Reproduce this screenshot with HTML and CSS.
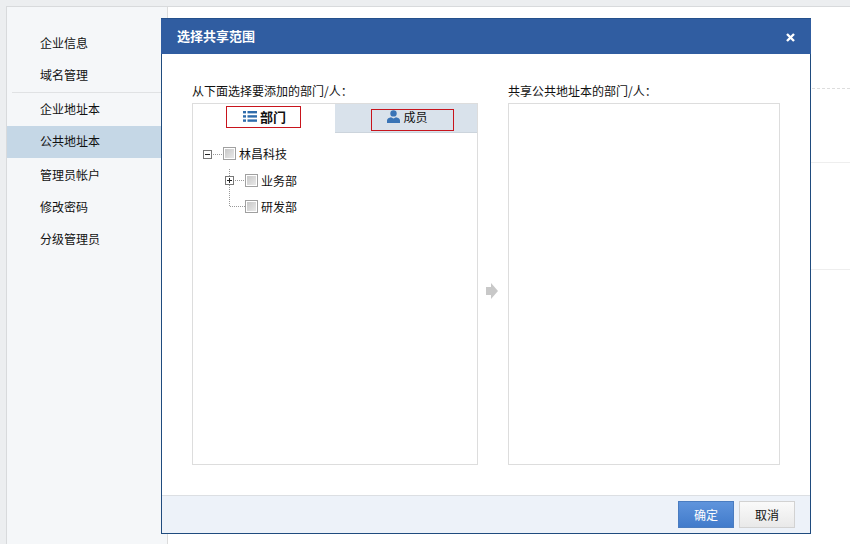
FILE: index.html
```html
<!DOCTYPE html>
<html lang="zh-CN">
<head>
<meta charset="utf-8">
<title>选择共享范围</title>
<link rel="stylesheet" href="styles.css">
</head>
<body>
<div class="frame">
  <nav class="sidebar">
    <a class="nav-item">企业信息</a>
    <a class="nav-item">域名管理</a>
    <div class="nav-divider"></div>
    <a class="nav-item">企业地址本</a>
    <a class="nav-item active">公共地址本</a>
    <a class="nav-item">管理员帐户</a>
    <a class="nav-item">修改密码</a>
    <a class="nav-item">分级管理员</a>
  </nav>
  <main class="main">
    <div class="rule rule-dashed"></div>
    <div class="rule rule-second"></div>
    <div class="rule rule-third"></div>
  </main>
</div>

<section class="modal">
  <header class="modal-head">
    <h1 class="modal-title">选择共享范围</h1>
    <svg class="close" width="9" height="9" viewBox="0 0 9 9"><path d="M1 1L8 8M8 1L1 8" stroke="#fff" stroke-width="2.4" fill="none"/></svg>
  </header>
  <div class="modal-body">
    <div class="col col-left">
      <div class="col-label">从下面选择要添加的部门/人：</div>
      <div class="box">
        <div class="tabs">
          <div class="tab tab-on">
            <svg width="14" height="11" viewBox="0 0 14 11"><g fill="#2f6cab"><rect x="0" y="0" width="3" height="2.4"/><rect x="4.5" y="0" width="9.5" height="2.4"/><rect x="0" y="4.2" width="3" height="2.4"/><rect x="4.5" y="4.2" width="9.5" height="2.4"/><rect x="0" y="8.4" width="3" height="2.4"/><rect x="4.5" y="8.4" width="9.5" height="2.4"/></g></svg>
            <span>部门</span>
            <i class="mark mark-a"></i>
          </div>
          <div class="tab tab-off">
            <svg width="13" height="13" viewBox="0 0 13 13"><g fill="#3a74b6"><circle cx="6.5" cy="3.4" r="3.2"/><path d="M0 13V10.6C0 8.6 2 7.6 4 7.2L6.5 8.6L9 7.2C11 7.6 13 8.6 13 10.6V13Z"/></g></svg>
            <span>成员</span>
            <i class="mark mark-b"></i>
          </div>
        </div>
        <ul class="tree">
          <li class="node node-root">
            <svg class="link" width="20" height="26" viewBox="0 0 20 26"><rect x="0.5" y="9.5" width="8" height="8" fill="#fff" stroke="#777"/><path d="M2 13.5H7" stroke="#222"/><path d="M10 13.5H20" stroke="#999" stroke-dasharray="1 1"/></svg>
            <span class="check"></span><span class="node-text">林昌科技</span>
          </li>
          <li class="node">
            <svg class="link" width="20" height="26" viewBox="0 0 20 26"><path d="M4.5 2V9M4.5 18V26" stroke="#999" stroke-dasharray="1 1"/><rect x="0.5" y="9.5" width="8" height="8" fill="#fff" stroke="#777"/><path d="M2 13.5H7M4.5 11V16" stroke="#222"/><path d="M10 13.5H20" stroke="#999" stroke-dasharray="1 1"/></svg>
            <span class="check"></span><span class="node-text">业务部</span>
          </li>
          <li class="node">
            <svg class="link" width="20" height="26" viewBox="0 0 20 26"><path d="M4.5 0V13.5H20" stroke="#999" stroke-dasharray="1 1" fill="none"/></svg>
            <span class="check"></span><span class="node-text">研发部</span>
          </li>
        </ul>
      </div>
    </div>
    <div class="arrow-col">
      <svg width="12" height="16" viewBox="0 0 12 16"><path d="M0 4H5V0L12 8L5 16V12H0Z" fill="#c8c8c8"/></svg>
    </div>
    <div class="col col-right">
      <div class="col-label">共享公共地址本的部门/人：</div>
      <div class="box"></div>
    </div>
  </div>
  <footer class="modal-foot">
    <button class="btn btn-primary" type="button">确定</button>
    <button class="btn btn-plain" type="button">取消</button>
  </footer>
</section>
</body>
</html>
```
FILE: styles.css
```css
* { box-sizing: border-box; }
html, body { margin: 0; height: 100%; }
body {
  padding: 6px 0 0 6px;
  background: #eceef0;
  font-family: "Noto Sans CJK SC", "Liberation Sans", sans-serif;
  font-size: 12px;
  color: #111;
  overflow: hidden;
}
.frame {
  display: flex;
  height: 538px;
  border-top: 1px solid #d8dadc;
  border-left: 1px solid #d8dadc;
  background: #fff;
}
.sidebar {
  width: 161px;
  flex: none;
  padding-top: 20px;
  background: #f5f7f9;
  border-right: 1px solid #dcdcdc;
}
.nav-item {
  display: block;
  height: 32px;
  padding-left: 33px;
  line-height: 32px;
  color: #111;
}
.nav-item.active {
  background: #c5d7e6;
  margin: 1px 0;
  line-height: 30px;
}
.nav-divider {
  height: 1px;
  margin: 1px 0 0 5px;
  background: #e0e2e4;
}
.main { flex: 1; padding-top: 81px; }
.rule { border-top: 1px solid #eee; }
.rule-dashed { border-top: 1px dashed #ddd; }
.rule-second { margin-top: 73px; }
.rule-third { margin-top: 106px; }

.modal {
  position: absolute;
  left: 161px;
  top: 18px;
  width: 650px;
  height: 516px;
  display: flex;
  flex-direction: column;
  background: #fff;
  border: 1px solid #1f4b7e;
  border-top: 0;
}
.modal-head {
  height: 36px;
  flex: none;
  display: flex;
  align-items: center;
  justify-content: space-between;
  margin: 0 -1px;
  padding: 0 16px 2px 16px;
  background: #305da1;
  border-top: 1px solid #24508c;
}
.modal-title {
  margin: 0;
  font-size: 13px;
  font-weight: 700;
  color: #fff;
}
.close { margin-top: 4px; }
.modal-body {
  flex: 1;
  display: flex;
  padding: 29px 30px 30px;
}
.col { display: flex; flex-direction: column; }
.col-left { width: 286px; }
.col-right { width: 272px; }
.col-label {
  height: 20px;
  line-height: 16px;
  color: #111;
  white-space: nowrap;
}
.box {
  flex: 1;
  border: 1px solid #ddd;
  background: #fff;
}
.arrow-col {
  width: 30px;
  padding: 33px 0 0 8px;
  display: flex;
  align-items: center;
}
.tabs { display: flex; height: 29px; }
.tab {
  position: relative;
  flex: 0 0 50%;
  display: flex;
  align-items: center;
  justify-content: center;
  gap: 3px;
}
.tab-on { font-size: 13px; font-weight: 700; color: #111; padding: 0 0 5px 1px; }
.tab-off { background: #d9e2eb; border-bottom: 1px solid #ccd4dc; padding: 0 0 3px 3px; }
.mark {
  position: absolute;
  height: 22px;
  border: 1px solid #c8141c;
}
.mark-a { left: 33px; top: 2px; width: 75px; }
.mark-b { left: 36px; top: 5px; width: 83px; }
.tree { list-style: none; margin: 0; padding: 7px 0 0 10px; }
.node {
  display: flex;
  align-items: center;
  height: 26px;
  padding-left: 22px;
}
.node-root { padding-left: 0; height: 27px; }
.link { flex: none; }
.check {
  flex: none;
  width: 13px;
  height: 13px;
  border: 1px solid #a0a0a0;
  box-shadow: inset 0 0 0 1px #fff;
  background: linear-gradient(135deg, #c4c4c4, #ececec);
}
.node-text { margin-left: 3px; color: #111; }
.modal-foot {
  height: 38px;
  flex: none;
  display: flex;
  justify-content: flex-end;
  gap: 5px;
  padding: 5px 15px 0 0;
  background: #edf2f9;
  border-top: 1px solid #dcdfe3;
}
.btn {
  width: 56px;
  height: 27px;
  padding: 0;
  font: inherit;
  border-radius: 0;
}
.btn-primary {
  color: #fff;
  background: linear-gradient(#5f94dc, #417bcb);
  border: 1px solid #4a7cc0;
}
.btn-plain {
  color: #111;
  background: linear-gradient(#fafafa, #e9e9e9);
  border: 1px solid #d2d2d2;
}
```
